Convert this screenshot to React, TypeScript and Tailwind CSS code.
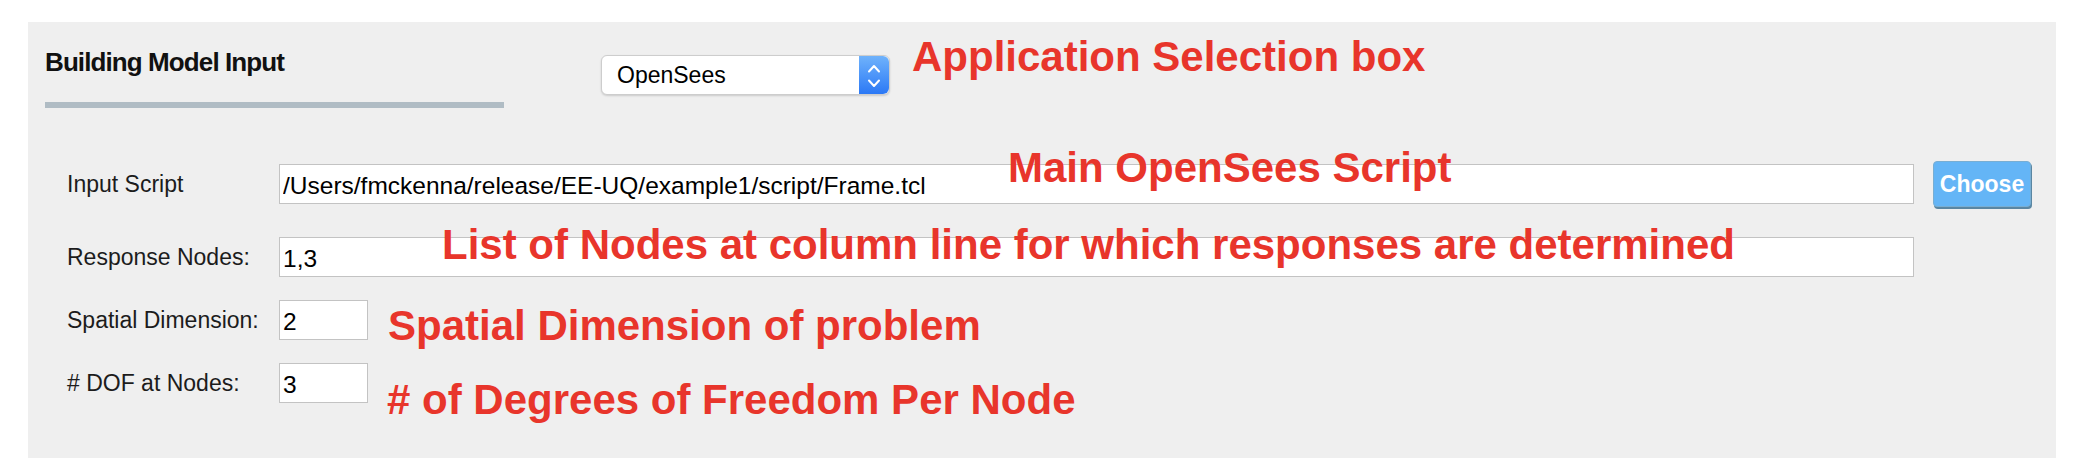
import React from "react";

const sans = "font-['Liberation_Sans',Arial,Helvetica,sans-serif]";
const note = "text-[42px] font-bold text-[#e8352b] whitespace-nowrap";

function Stepper() {
  return (
    <div className="h-full w-[30px] shrink-0 rounded-r-[6px] bg-gradient-to-b from-[#6fb2fb] to-[#2b78f5]">
      <svg width="30" height="40" viewBox="0 0 30 40" fill="none">
        <path d="M10 15.5 L15 10 L20 15.5" stroke="white" strokeWidth="2" strokeLinecap="round" strokeLinejoin="round" />
        <path d="M10 24.5 L15 30 L20 24.5" stroke="white" strokeWidth="2" strokeLinecap="round" strokeLinejoin="round" />
      </svg>
    </div>
  );
}

function Field({ value, className }: { value: string; className: string }) {
  return (
    <input
      readOnly
      value={value}
      className={`h-[40px] border-[1.5px] border-[#c3c3c3] bg-white pl-[3px] pt-[3px] text-[24.5px] text-black outline-none ${className}`}
    />
  );
}

function Row({ label, children, className = "" }: { label: string; children: React.ReactNode; className?: string }) {
  return (
    <div className={`flex items-center ${className}`}>
      <span className="w-[212px] shrink-0 text-[23px] text-[#1c1c1c]">{label}</span>
      {children}
    </div>
  );
}

export default function App() {
  return (
    <div className={`min-h-[476px] w-[2076px] bg-white pt-[22px] ${sans}`}>
      <div className="relative ml-[28px] h-[436px] w-[2028px] bg-[#efefef]">
        {/* header */}
        <div className="flex items-start pl-[17px] pt-[14px]">
          <div className="mt-[14px] w-[459px] shrink-0">
            <h1 className="text-[26px] leading-[25px] font-bold tracking-[-0.9px] text-[#111]">Building Model Input</h1>
            <div className="mt-[27px] h-[6px] bg-[#b0bcc4]" />
          </div>

          <div className="ml-[97px] mt-[19px] flex h-[40px] w-[289px] shrink-0 items-center rounded-[6px] border border-[#cdcdcd] bg-white shadow-[0_1px_2px_rgba(0,0,0,0.15)]">
            <span className="flex-1 pl-[15px] text-[23px] text-black">OpenSees</span>
            <Stepper />
          </div>

          <span className={`ml-[22px] leading-[42px] ${note}`}>Application Selection box</span>
        </div>

        {/* form */}
        <div className="mt-[53px] pl-[39px] pr-[25px]">
          <Row label="Input Script">
            <Field value="/Users/fmckenna/release/EE-UQ/example1/script/Frame.tcl" className="flex-1" />
            <button className="ml-[19px] h-[46px] w-[98px] shrink-0 rounded-[4px] border border-[#78aed3] bg-[#64b5f6] text-[23px] font-bold text-white shadow-[1px_2px_0_#5a86a2]">
              Choose
            </button>
          </Row>

          <Row label="Response Nodes:" className="mt-[30px] pr-[117px]">
            <Field value="1,3" className="flex-1" />
          </Row>

          <Row label="Spatial Dimension:" className="mt-[23px]">
            <Field value="2" className="w-[89px]" />
            <span className={`ml-[20px] h-[40px] leading-[51px] ${note}`}>Spatial Dimension of problem</span>
          </Row>

          <Row label="# DOF at Nodes:" className="mt-[23px]">
            <Field value="3" className="w-[89px]" />
            <span className={`ml-[19px] h-[40px] leading-[73px] ${note}`}># of Degrees of Freedom Per Node</span>
          </Row>
        </div>

        {/* annotations laid over the form */}
        <span className={`absolute left-[980px] top-[125px] leading-[42px] ${note}`}>Main OpenSees Script</span>
        <span className={`absolute left-[414px] top-[202px] leading-[42px] ${note}`}>
          List of Nodes at column line for which responses are determined
        </span>
      </div>
    </div>
  );
}
